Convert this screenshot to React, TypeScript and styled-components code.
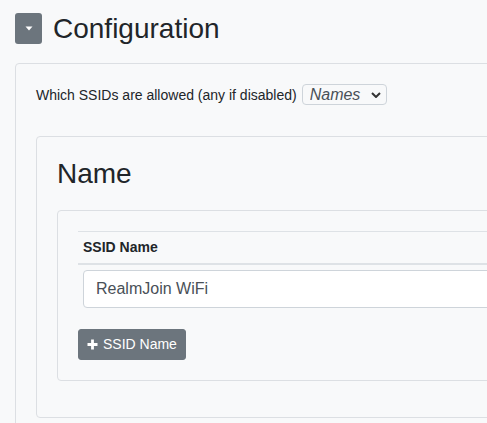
import React from "react";
import styled, { createGlobalStyle } from "styled-components";

const GlobalStyle = createGlobalStyle`
  html, body {
    margin: 0;
    padding: 0;
    background: #f8f9fa;
    overflow: hidden;
  }
  body {
    font-family: "Liberation Sans", Arial, sans-serif;
    color: #212529;
  }
  * { box-sizing: border-box; }
`;

const Page = styled.div`
  padding: 13px 0 0 15px;
  width: 900px;
`;

const Header = styled.div`
  display: flex;
  align-items: center;
  height: 31px;
`;

const ToggleButton = styled.button`
  width: 27px;
  height: 31px;
  padding: 0;
  border: none;
  border-radius: 3px;
  background: #6c757d;
  display: flex;
  align-items: center;
  justify-content: center;
  margin-right: 11px;
`;

const Title = styled.h2`
  margin: 0;
  font-size: 28px;
  font-weight: 400;
  line-height: 34px;
  color: #212529;
`;

const Card = styled.div<{ $padBottom?: number; $mt?: number }>`
  border: 1px solid #dcdfe3;
  border-radius: 4px;
  padding: 20px 20px ${(p) => p.$padBottom ?? 20}px 20px;
  margin-top: ${(p) => p.$mt ?? 0}px;
`;

const OuterCard = styled(Card)`
  width: 800px;
  min-height: 400px;
`;

const FieldRow = styled.div`
  display: flex;
  align-items: center;
  height: 21px;
`;

const Label = styled.label`
  font-size: 14px;
  color: #212529;
  margin-right: 5px;
`;

const SelectWrap = styled.div`
  position: relative;
  display: inline-flex;
`;

const Select = styled.select`
  appearance: none;
  -webkit-appearance: none;
  width: 85px;
  height: 21px;
  border: 1px solid #ced4da;
  border-radius: 4px;
  background: transparent;
  font-family: "Liberation Sans", Arial, sans-serif;
  font-size: 16px;
  font-style: italic;
  color: #495057;
  padding: 0 0 0 7px;
  line-height: 19px;
  outline: none;
`;

const Chevron = styled.svg`
  position: absolute;
  right: 6px;
  top: 8px;
  pointer-events: none;
`;

const SectionTitle = styled.h3`
  margin: 0 0 19px;
  font-size: 28px;
  font-weight: 400;
  line-height: 34px;
  color: #212529;
`;

const Table = styled.table`
  width: 100%;
  border-collapse: collapse;
  font-size: 14px;
`;

const Th = styled.th`
  text-align: left;
  font-weight: 700;
  line-height: 21px;
  padding: 5px;
  border-top: 1px solid #dee2e6;
  border-bottom: 2px solid #dee2e6;
  color: #212529;
`;

const Td = styled.td`
  padding: 5px;
`;

const Input = styled.input`
  display: block;
  width: 100%;
  height: 38px;
  border: 1px solid #ced4da;
  border-radius: 4px;
  background: #fff;
  padding: 6px 12px;
  font-family: "Liberation Sans", Arial, sans-serif;
  font-size: 16px;
  color: #495057;
  outline: none;
`;

const AddButton = styled.button`
  display: inline-flex;
  align-items: center;
  margin-top: 16px;
  height: 31px;
  padding: 0 8px;
  border: 1px solid #6c757d;
  border-radius: 3px;
  background: #6c757d;
  color: #fff;
  font-family: "Liberation Sans", Arial, sans-serif;
  font-size: 14px;
  line-height: 21px;
`;

const PlusIcon = styled.svg`
  margin-right: 5px;
  flex: none;
`;

export default function App() {
  return (
    <>
      <GlobalStyle />
      <Page>
        <Header>
          <ToggleButton aria-label="toggle">
            <svg width="8" height="5" viewBox="0 0 8 5">
              <polygon points="0.5,0.5 7.5,0.5 4,4.5" fill="#fff" />
            </svg>
          </ToggleButton>
          <Title>Configuration</Title>
        </Header>
        <OuterCard $mt={19}>
          <FieldRow>
            <Label>Which SSIDs are allowed (any if disabled)</Label>
            <SelectWrap>
              <Select defaultValue="Names">
                <option>Names</option>
              </Select>
              <Chevron width="10" height="6" viewBox="0 0 10 6">
                <polyline points="1,1 5,5 9,1" fill="none" stroke="#333" strokeWidth="2" />
              </Chevron>
            </SelectWrap>
          </FieldRow>
          <Card $mt={31} $padBottom={36}>
            <SectionTitle>Name</SectionTitle>
            <Card>
              <Table>
                <thead>
                  <tr>
                    <Th>SSID Name</Th>
                  </tr>
                </thead>
                <tbody>
                  <tr>
                    <Td>
                      <Input defaultValue="RealmJoin WiFi" />
                    </Td>
                  </tr>
                </tbody>
              </Table>
              <AddButton>
                <PlusIcon width="11" height="11" viewBox="0 0 11 11">
                  <path d="M5.5 0.5V10.5M0.5 5.5H10.5" stroke="#fff" strokeWidth="2.8" />
                </PlusIcon>
                SSID Name
              </AddButton>
            </Card>
          </Card>
        </OuterCard>
      </Page>
    </>
  );
}
